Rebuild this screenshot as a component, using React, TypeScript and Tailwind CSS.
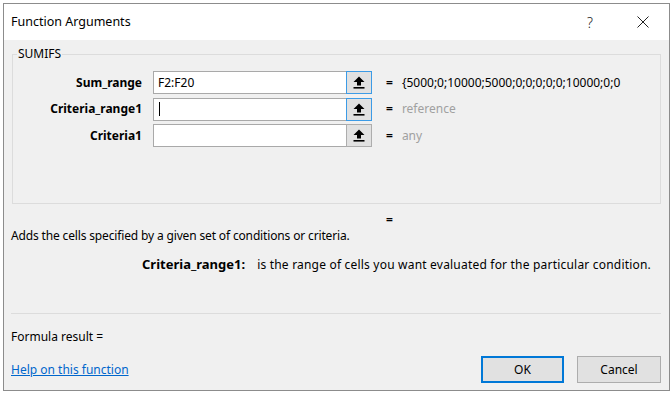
import React from "react";

type ArgRow = {
  label: string;
  value: string;
  result: string;
  muted?: boolean;
  caret?: boolean;
  focused?: boolean;
};

const rows: ArgRow[] = [
  {
    label: "Sum_range",
    value: "F2:F20",
    result: "{5000;0;10000;5000;0;0;0;0;0;10000;0;0",
    focused: true,
  },
  {
    label: "Criteria_range1",
    value: "",
    result: "reference",
    muted: true,
    caret: true,
    focused: true,
  },
  {
    label: "Criteria1",
    value: "",
    result: "any",
    muted: true,
  },
];

function CollapseIcon() {
  return (
    <svg width="12" height="13" viewBox="0 0 12 13" aria-hidden="true">
      <path d="M6 0.5 L11.5 6 L8 6 L8 9.5 L4 9.5 L4 6 L0.5 6 Z" fill="#000" />
      <rect x="0.5" y="11" width="11" height="1.6" fill="#000" />
    </svg>
  );
}

function ArgInput({ row }: { row: ArgRow }) {
  return (
    <div className="flex h-[23px] w-[219px] border border-[#a9a9a9] bg-white">
      <div className="flex flex-1 items-center pl-[4px] text-[12px] text-black">
        {row.value}
        {row.caret && <span className="ml-[1px] h-[14px] w-[1px] bg-black" />}
      </div>
      <div
        className={`-my-[1px] -mr-[1px] flex w-[26px] items-center justify-center border bg-[#e1e1e1] ${
          row.focused ? "border-[#3c9be6]" : "border-[#adadad]"
        }`}
      >
        <CollapseIcon />
      </div>
    </div>
  );
}

export default function App() {
  return (
    <div
      className="h-[393px] w-[672px] overflow-hidden bg-white pl-[3px] pt-[3px]"
      style={{ fontFamily: '"Noto Sans", "Open Sans", sans-serif' }}
    >
      <div className="flex h-[388px] w-[667px] flex-col border border-[#8c8c8c] bg-[#f0f0f0]">
        {/* Title bar */}
        <div className="flex h-[36px] items-center bg-white pl-[7px] pr-[20px]">
          <span className="text-[12.5px] text-black">Function Arguments</span>
          <span className="ml-auto mr-[44px] text-[14px] font-light text-[#222]">?</span>
          <svg width="12" height="12" viewBox="0 0 12 12" aria-hidden="true">
            <path d="M0.5 0.5 L11.5 11.5 M11.5 0.5 L0.5 11.5" stroke="#222" strokeWidth="1" />
          </svg>
        </div>

        {/* Body */}
        <div className="flex flex-1 flex-col px-[7px] pt-[6px] text-[12px] text-black">
          <fieldset className="mx-[1px] h-[158px] border border-[#dcdcdc] px-0 pb-0">
            <legend className="ml-[4px] px-[1px] text-[12px] leading-[16px]">SUMIFS</legend>
            <div className="mt-[9px] flex flex-col gap-[3.5px]">
              {rows.map((row) => (
                <div key={row.label} className="flex items-center">
                  <span className="w-[129px] text-right text-[12px] font-bold">{row.label}</span>
                  <div className="ml-[11px]">
                    <ArgInput row={row} />
                  </div>
                  <span className="ml-[14px] font-bold">=</span>
                  <span
                    className={`ml-[9px] whitespace-nowrap ${
                      row.muted ? "text-[#a0a0a0]" : "text-black"
                    }`}
                  >
                    {row.result}
                  </span>
                </div>
              ))}
            </div>
          </fieldset>

          <div className="mt-[8px] pl-[375px] leading-[16px] font-bold">=</div>
          <div className="leading-[16px] tracking-[-0.15px]">
            Adds the cells specified by a given set of conditions or criteria.
          </div>
          <div className="mt-[12px] flex items-baseline pl-[131px] leading-[16px]">
            <span className="text-[13px] font-bold">Criteria_range1:</span>
            <span className="ml-[12px] tracking-[0.2px]">
              is the range of cells you want evaluated for the particular condition.
            </span>
          </div>

          <div className="mt-[40px] mr-[1px] h-[1px] bg-[#dcdcdc]" />

          <div className="mt-[15px] leading-[16px]">Formula result =</div>

          <div className="mt-[11px] flex items-center">
            <a href="#" className="text-[12px] text-[#0066cc] underline">
              Help on this function
            </a>
            <button
              type="button"
              className="ml-auto h-[27px] w-[83px] border-2 border-[#0078d7] bg-[#e1e1e1] text-[12px]"
            >
              OK
            </button>
            <button
              type="button"
              className="ml-[13px] mr-[1px] h-[27px] w-[84px] border border-[#adadad] bg-[#e1e1e1] text-[12px]"
            >
              Cancel
            </button>
          </div>
        </div>
      </div>
    </div>
  );
}
